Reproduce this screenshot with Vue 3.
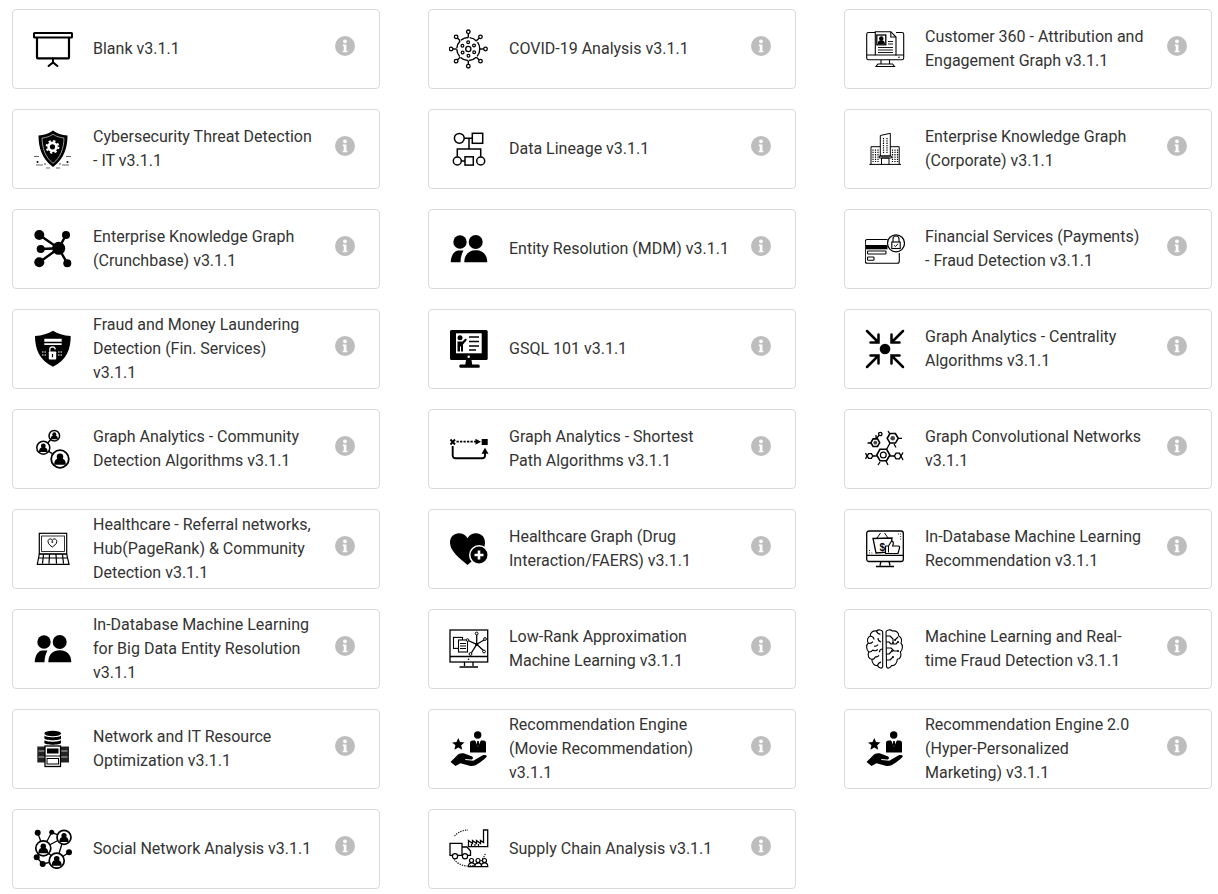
<script setup>
const S = 'fill="none" stroke="#000"'

// circle with a bust inside, used by the community and social network icons
const bust = (x, y, r, sw = 1.5) => `
  <circle cx="${x}" cy="${y}" r="${r}" fill="#fff" stroke="#000" stroke-width="${sw}"/>
  <circle cx="${x}" cy="${y - r * 0.26}" r="${r * 0.37}" fill="#000"/>
  <path d="M${x - r * 0.66} ${y + r * 0.66}c0-${r * 0.6} ${r * 0.3}-${r * 0.74} ${r * 0.66}-${r * 0.74}s${r * 0.66} ${r * 0.14} ${r * 0.66} ${r * 0.74}z" fill="#000"/>`

const blank = `
  <rect x="1" y="4" width="38" height="4.4" ${S} stroke-width="2" rx=".5"/>
  <path d="M4 8.400V28.600a.8.8 0 0 0 .8.8H35.200a.8.8 0 0 0 .8-.8V8.400" ${S} stroke-width="2.200"/>
  <path d="M20 29.400v4.200M15.600 37l4.400-3.600 4.400 3.600" ${S} stroke-width="2" stroke-linecap="round"/>`

const shield = `
  <path d="M20 1.500c3.800 2.900 8.800 4.500 14.500 5 0 12-3.200 23-14.500 31.500C8.700 29.500 5.500 18.500 5.500 6.500c5.700-.5 10.700-2.100 14.500-5z" fill="#000"/>
  <path d="M20 5.300c3 2 6.500 3.200 11 3.800-.3 9.800-3 19-11 25.300-8-6.300-10.700-15.500-11-25.300 4.500-.6 8-1.800 11-3.800z" fill="none" stroke="#fff" stroke-width=".6"/>
  <circle cx="19.500" cy="17.800" r="3.900" fill="none" stroke="#fff" stroke-width="2.600"/>
  <circle cx="19.500" cy="17.800" r="5.800" fill="none" stroke="#fff" stroke-width="2.200" stroke-dasharray="2.200 2.350"/>
  <path d="M1 27.500h5M33 27.500h5M3 36h7M29 36h7M13 39h4M23 39h4" ${S} stroke-width=".6"/>
  <circle cx="4.500" cy="33" r="1"/><circle cx="12" cy="35" r=".7"/><circle cx="27" cy="35" r=".7"/><circle cx="34.500" cy="33" r="1"/>`

const hub = `
  <path d="M25.700 19.300 6.300 6M25.700 19.300 33 6M25.700 19.300 7.700 20M25.700 19.300 6.300 33.300M25.700 19.300 34.300 34.300" ${S} stroke-width="2.400"/>
  <circle cx="25.700" cy="19.300" r="6.500"/><circle cx="6.300" cy="6" r="5"/><circle cx="33" cy="6" r="4"/>
  <circle cx="7.700" cy="20" r="4"/><circle cx="6.300" cy="33.300" r="5"/><circle cx="34.300" cy="34.300" r="4"/>`

const covid = (() => {
  let spikes = ''
  let inner = ''
  for (let i = 0; i < 8; i++) {
    const a = (i * Math.PI) / 4
    const c = Math.cos(a)
    const s = Math.sin(a)
    spikes += `<path d="M${19.3 + 11.5 * c} ${20 + 11.5 * s}L${19.3 + 15.5 * c} ${20 + 15.5 * s}" ${S} stroke-width="1.400"/>
      <circle cx="${19.3 + 17.2 * c}" cy="${20 + 17.2 * s}" r="1.800" fill="#fff" stroke="#000" stroke-width="1.300"/>`
  }
  for (let i = 0; i < 6; i++) {
    const a = (i * Math.PI) / 3 + 0.5
    inner += `<circle cx="${19.3 + 6.7 * Math.cos(a)}" cy="${20 + 6.7 * Math.sin(a)}" r="1.400" ${S} stroke-width="1.200"/>`
  }
  return `<circle cx="19.300" cy="20" r="11.500" ${S} stroke-width="1.400" stroke-dasharray="8 1.200"/>
    <circle cx="19.300" cy="20" r="2.600" ${S} stroke-width="1.300"/>${spikes}${inner}`
})()

const lineage = `<g ${S} stroke-width="1.500">
  <circle cx="10.300" cy="9.300" r="4.900"/><rect x="23.300" y="4.300" width="10.400" height="10"/>
  <path d="M15.200 9.300h8.100M20 9.300V20M8.300 27.800V20h23.400v7.800M12.300 32H16"/>
  <circle cx="8.300" cy="32" r="4"/><rect x="16" y="27.800" width="8.300" height="8.300"/><circle cx="31.700" cy="32" r="4"/></g>`

const people = `
  <circle cx="11" cy="13" r="6.700"/><circle cx="26.700" cy="13" r="7"/>
  <path d="M15.300 33.300C15.300 25.500 20 21.300 26.700 21.300S38.300 25.500 38.300 33.300z"/>
  <path d="M1.700 33.300C2 26.500 5 22 9 21.500h5.500C12.500 25 11.500 29 11.500 33.300z"/>`

const customer = `<g ${S} stroke-width="1.100">
  <path d="M10 3.500H3.500a1.800 1.800 0 0 0-1.800 1.800V29a1.800 1.800 0 0 0 1.800 1.800h33.400a1.800 1.800 0 0 0 1.800-1.800V5.300a1.800 1.800 0 0 0-1.800-1.800H31"/>
  <path d="M1.700 26h8.600M30.500 26h8.200M16 31v4M24.500 31v4M11 37.500h18.500l-2-2.500H13z"/>
  <path d="M10.300 26V2.700h15.500L31 8v18z"/><path d="M25.800 2.700V8H31"/>
  <rect x="11.800" y="6" width="9" height="9.800" stroke-width="1.300"/>
  <path d="M13.300 14.500c0-2 1.300-2.800 3-2.800s3 .8 3 2.800z" fill="#000"/><circle cx="16.300" cy="9.500" r="1.700" fill="#000"/>
  <path d="M23 12.500h5M23 15h5M13 18.500h15M13 21h15M13 23.500h15" stroke-width=".9"/></g>
  <circle cx="34" cy="28.300" r=".8"/>`

const building = `<g ${S} stroke-width="1">
  <path d="M4.300 35.400H36M6 35.400V17.700h9.300M34.200 35.400V17.700H25.300M15.300 27V6.500L25.300 4.300V27M15.300 27H25.300M16.500 35.400V29h7.500v6.400M14.300 27h12v2h-12z"/>
  <path d="M8 20.500V33M10.500 20.500V33M13 20.500V33M27.500 20.500V33M30 20.500V33M32.500 20.500V33M18.500 9v15M22 9v15" stroke-dasharray="1.300 1" stroke-width="1.200"/></g>`

const card = `<g ${S} stroke-width="1.100">
  <path d="M22.500 10.500H2.300a2 2 0 0 0-2 2v19.800a2 2 0 0 0 2 2h30a2 2 0 0 0 2-2V24"/>
  <rect x="2.500" y="22" width="18.500" height="3" rx=".8"/><rect x="2.500" y="28" width="6.500" height="3.200" rx=".8"/></g>
  <rect x="1" y="16" width="21.500" height="4.300"/>
  <circle cx="31" cy="14.300" r="8.500" fill="#fff" stroke="#000" stroke-width="1.200"/>
  <path d="M28 13v-3a3 3 0 0 1 6 0v3" ${S} stroke-width="1.100"/>
  <rect x="26.800" y="13" width="8.400" height="6.500" ${S} stroke-width="1.100"/>
  <path d="M29 16.200l1.500 1.400 2.500-2.800" ${S} stroke-width=".9"/>`

const fraud = `
  <path d="M20 1.700c4.500 3 10.500 4.700 17.700 5.300 0 13-4 24-17.700 30.700C6.300 31 2 20 2 7c7.200-.6 13.200-2.300 18-5.300z"/>
  <path d="M11.300 9.800h17.400v3H11.300zM11.300 14.200h17.400v1.700H11.300z" fill="#fff"/>
  <path d="M16.800 22.700v-2.200a2.700 2.700 0 0 1 5.400 0" fill="none" stroke="#fff" stroke-width="1.200"/>
  <rect x="15.800" y="22.500" width="7.400" height="8" rx=".7" fill="#fff"/>
  <rect x="18.900" y="25" width="1.200" height="3.300"/>
  <path d="M9 23h5M9 26h5M25 23h5M25 26h5" stroke="#fff" stroke-width="1" stroke-dasharray="1.500 1"/>`

const gsql = `
  <rect x="1" y="1" width="37.700" height="30" rx="1.500"/>
  <rect x="7" y="4.300" width="25.700" height="20" fill="#fff"/>
  <circle cx="19.700" cy="27.700" r="1.200" fill="#fff"/>
  <path d="M17 31h5.500l.7 4.500h5.800a1.800 1.800 0 0 1 1.200 3.200H11.200a1.800 1.800 0 0 1 0-3.200h5.100z"/>
  <circle cx="11" cy="8.800" r="2.500"/>
  <path d="M8.500 22.500V12.500h5l3-3 1.500 1.300-4 4.700v7h-2v-5h-1v5z"/>
  <path d="M20 8h10M20 12.500h10M20 17h10M20 21h7" ${S} stroke-width="1.700"/>`

const centrality = `<circle cx="20" cy="20" r="5.300"/>
  <g ${S} stroke-width="2.500" stroke-linecap="round">
  <path d="M2 2L13.500 13.500M13.500 5.500V13.500H5.500"/><path d="M38 2L26.500 13.500M26.500 5.500V13.500H34.500"/>
  <path d="M2 38L13.500 26.500M13.500 34.500V26.500H5.500"/><path d="M38 38L26.500 26.500M26.500 34.500V26.500H34.500"/></g>`

const community = `<path d="M21.300 6.700 10.300 18.700 27 30" ${S} stroke-width="1.400"/>
  ${bust(21.3, 6.7, 5.3)}${bust(10.3, 18.7, 6.5)}${bust(27, 30, 8.8, 1.8)}`

const shortest = `
  <path d="M1.500 10.500l4.500 5M6 10.500l-4.500 5" ${S} stroke-width="1.900"/>
  <path d="M7.500 12.700h20" ${S} stroke-width="1.800" stroke-dasharray="2.300 1.200"/>
  <path d="M26.500 9.700l5.500 3-5.500 3z"/><rect x="32.700" y="10" width="6" height="6"/>
  <path d="M3.700 17v9.500a2.800 2.800 0 0 0 2.800 2.800h26.700a2.800 2.800 0 0 0 2.800-2.800V23" ${S} stroke-width="1.900"/>
  <path d="M36 18.800l-3.500 6h7z"/>`

const hex = (x, y, r, sw = 1.4) => {
  const pts = []
  for (let i = 0; i < 6; i++) {
    const a = (i * Math.PI) / 3
    pts.push(`${x + r * Math.cos(a)},${y + r * Math.sin(a)}`)
  }
  return `<polygon points="${pts.join(' ')}" ${S} stroke-width="${sw}"/>`
}
const gcn = `
  ${hex(18.3, 26, 6.6, 1.6)}<circle cx="18.300" cy="26" r="2.900" ${S} stroke-width="1.200"/>
  ${hex(27.7, 9.3, 5.5, 1.6)}<circle cx="27.700" cy="9.300" r="2.300" fill="#444"/>
  ${hex(10.3, 13.7, 4.4, 1.6)}<circle cx="10.300" cy="13.700" r="1.900" fill="#444"/>
  ${hex(32.7, 27, 3.3)}${hex(5, 27, 2.8)}
  <circle cx="15.300" cy="5" r="1.700" ${S} stroke-width="1.300"/>
  <g ${S} stroke-width="1.300">
  <path d="M21.500 20.500 25 14M24.800 27h4.600M8 27h3.800M11.500 9.300l2.700-3M6 14H2.500M33 9.300h4M24.500 4.500 23 2M29 15l2 3.500M15 33l-2 3M21 32l2 4M36 27l2-3.500M36 27l2 4M2 27 .5 24M2 27 .5 30M11 9.300V6"/></g>`

const laptop = `<g ${S} stroke-width="1.200">
  <rect x="6.300" y="4.300" width="27.400" height="20.700"/><rect x="8.600" y="7" width="22.800" height="15.500" stroke-width=".8"/>
  <path d="M15 12.500c0-3 3.500-3.500 4.300-1 .8-2.500 4.500-2 4.500 1 0 2.700-3 4.300-4.500 5.500-1.500-1.200-4.300-2.800-4.300-5.500z" stroke-width="1"/>
  <path d="M6.300 25 4.300 35.300H36L33.700 25zM5.500 29h29M10.500 25.500l-1 9M16.500 25.500l-.5 9M23 25.500l.5 9M29.500 25.500l1 9"/></g>
  <path d="M18.300 13h2M19.300 12v2" ${S} stroke-width=".7"/>`

const heart = `
  <path d="M18.500 36C11 29.500 1 22.500 1 13.500 1 8 5 4.300 10 4.300c3.500 0 6.700 1.800 8.500 5 1.800-3.200 5-5 8.500-5 5 0 9 3.700 9 9.200 0 3-1 5.500-2.500 8L22 33z"/>
  <circle cx="30" cy="26" r="10" fill="#fff"/><circle cx="30" cy="26" r="8.500"/>
  <path d="M30 21.500v9M25.500 26h9" fill="none" stroke="#fff" stroke-width="2.600"/>`

const inDb = `<g ${S} stroke-width="1.100">
  <rect x="1.700" y="2" width="36.600" height="30.500" rx="2.200" stroke-width="1.300"/>
  <path d="M1.700 26.300h36.600M16 32.500l-1 4M24 32.500l1 4M11 37.500h18" stroke-width="1.300"/>
  <path d="M8 9.500 27 9l-1.500 14-14.500 1z" stroke-width="1.300"/>
  <path d="M12 9 15.500 4M23 9 19.500 4" stroke-width="1"/></g>
  <text x="14.400" y="21.500" font-family="Liberation Sans" font-size="10" font-weight="700">$</text>
  <path d="M20.500 17h3l3-5c1.500 0 2 1.300 1.700 3l-.5 2h5.500a1.500 1.500 0 0 1 1.300 2l-1.500 5.500H20.500z" fill="#fff" stroke="#000" stroke-width="1.200"/>
  <path d="M23.500 17v6.500" ${S} stroke-width="1"/>
  <path d="M33 5h.8M35.300 5h.8M35.300 7.500h.8M35.300 10h.8M4 24h.8M6.500 24h.8M4 21.500h.8" ${S}/>`

const lowRank = `<g ${S} stroke-width="1.100">
  <rect x="1" y="1" width="37.700" height="32" stroke-width="1.300"/>
  <path d="M1 27.500h37.700M15.500 33v4M24 33v4M10.500 38h18.500" stroke-width="1.300"/>
  <rect x="4.500" y="8.400" width="9" height="11" /><rect x="9.500" y="11" width="9" height="12" fill="#fff"/>
  <path d="M11 14.500h6M11 17h6M11 19.500h6" stroke-width="1.100"/>
  <path d="M27.700 15.300 27.700 5M27.700 15.300 18 11M27.700 15.300 36 10.500M27.700 15.300 35 22M27.700 15.300 22 24.500" stroke-width="1.300"/></g>
  <circle cx="27.700" cy="15.300" r="1.500"/>
  <g fill="#fff" stroke="#000"><circle cx="27.700" cy="4.500" r="1.400"/><circle cx="18.500" cy="11" r="1.300"/><circle cx="36" cy="10" r="1.400"/><circle cx="35" cy="22.500" r="1.400"/><circle cx="21.500" cy="25" r="1.400"/></g>
  <circle cx="19.500" cy="30.200" r=".8"/>`

const brain = `<g ${S} stroke-width="1.100" stroke-linejoin="round">
  <path d="M17.700 2.800C17 .8 13.500.2 11.500 2 8 1.500 5 3.500 5.300 7 2.800 8 1.500 11.500 3.200 14 .9 16 1.200 21 3.800 23c-1.800 3 0 7 3 7.300.2 4 2.700 6.700 5.700 6.300 1.500 3 4.800 3.300 5.200.7z"/>
  <path d="M5.300 7c2 .2 3.500 1.500 3.800 3.500M11.500 2c.5 2 2 3 4 3.200M3.200 14c2 .8 3.500.3 4.800-1.300M13 9c0 2 1 3.500 3 4M3.800 23c1.800.2 3.200-.7 4-2 1.500 1 3.500 1 5-.5M9 17c1.500.5 3 0 4-1.300M17.500 20c-2 0-3 1.500-3 3.200M6.800 30.300c1.500 0 3-1 3.500-2.500 1.500.3 3-.3 3.700-1.500M12.500 36.600c.4-2 1.800-3.200 3.500-3.500"/>
  <path d="M21 2.800c.5-2 4.500-2.600 6.500-.8 3.500-.5 6.500 1.500 6.200 5 2.500 1 3.800 4.500 2.200 7 2.200 2 2 7-.6 9 1.800 3 0 7-3 7.300-.2 4-2.700 6.700-5.700 6.300-1.500 3-4.700 3.300-5.100.7z"/>
  <path d="M21 7h4l3 3v4M21 13h3l2 2h5l2-2M21 19h5l3 3h4M21 25h3l3-3M21 31h4l3-3M33 8l-3 3"/></g>
  <g><circle cx="28" cy="14" r="1"/><circle cx="33" cy="13" r="1"/><circle cx="27" cy="22" r="1"/><circle cx="33" cy="22" r="1"/><circle cx="28" cy="28" r="1"/><circle cx="30" cy="11" r="1"/></g>`

const network = `
  <ellipse cx="19.700" cy="4.500" rx="8.300" ry="2.700"/>
  <path d="M11.400 6.500c1 2.300 15.600 2.300 16.600 0v3c-1 2.300-15.600 2.300-16.600 0zM11.400 11c1 2.300 15.600 2.300 16.600 0v3c-1 2.300-15.600 2.300-16.600 0z"/>
  <rect x="4.300" y="17.500" width="12" height="16" fill="#222"/><rect x="24" y="17.500" width="12" height="16" fill="#222"/>
  <path d="M5.500 22h10M5.500 28h10M24.500 22h10M24.500 28h10" stroke="#bbb"/>
  <rect x="12" y="17" width="15.500" height="20.500" fill="#fff" stroke="#000" stroke-width="1.300"/>
  <rect x="14" y="19.500" width="11.500" height="5"/><path d="M12.500 27h14.500" stroke="#000"/><rect x="14" y="29.500" width="11.500" height="5.500" fill="#fff" stroke="#000"/>`

const reco = `
  <polygon points="9.300,9 11.100,13 15.500,13.400 12.200,16.300 13.200,20.700 9.300,18.400 5.400,20.700 6.400,16.300 3.100,13.400 7.500,13"/>
  <circle cx="28.700" cy="6" r="3.700"/>
  <path d="M21 14a2.500 2.500 0 0 1 2.500-2.500h10.500A2.500 2.500 0 0 1 37 14v9.500H21z"/>
  <path d="M26 11l3 7 3-7z" fill="#fff"/><path d="M28.200 12h1.600l.4 4-1.200 2-1.200-2z"/>
  <path d="M1.500 33 8 26.500c2-2 5-2.700 8-1.700l6.500 2.400c2.300.8 1.800 3.500-.7 3.300l-5.500-.5v1l8 .8 9-5.300c2-1.100 5.200-.3 4.200 1.500-3 3.200-7 6-10.500 8-2 1.100-4.500 1.300-6.500.7l-9-2.500-5 2.800z"/>`

const social = `
  <path d="M4.700 3.700 10.300 19.300M18.700 3.300 10.300 19.300M18.700 3.300 31 8.300M10.300 19.300 23.700 31.700M31 8.300 23.700 31.700M36 23.300 23.700 31.700M3.700 28.300 10.300 19.300M9.700 35 23.700 31.700M10.300 19.300 31 8.300M3.700 28.300 9.700 35" ${S} stroke-width="1.300"/>
  <circle cx="4.700" cy="3.700" r="3"/><circle cx="18.700" cy="3.300" r="2.500"/><circle cx="36" cy="23.300" r="3"/><circle cx="3.700" cy="28.300" r="3"/><circle cx="9.700" cy="35" r="3"/>
  ${bust(31, 8.3, 7, 1.7)}${bust(10.3, 19.3, 7.5, 1.7)}${bust(23.7, 31.7, 7.5, 1.7)}`

const supply = `
  <path d="M5.500 7A18 18 0 0 1 19 1M5 30.500A18 18 0 0 0 19 37M21 37A18 18 0 0 0 36.500 24" ${S} stroke-width="1.100" stroke-dasharray="1.300 1.100"/>
  <g ${S} stroke-width="1.200">
  <path d="M19.500 17.700V11.500l4 3v-3l4 3v-3l4 3v-3l3 2V1h4.200v16.700z" stroke-width="1.300"/>
  <path d="M22.500 15v2M26 15v2M29.500 15v2"/>
  <path d="M1 14.300h12v12H1zM13 18h5l3.500 4v4.300H13" stroke-width="1.300" fill="#fff"/>
  <circle cx="6" cy="27.300" r="2.600" fill="#fff"/><circle cx="16" cy="27.300" r="2.600" fill="#fff"/>
  <circle cx="22.500" cy="31.500" r="2"/><circle cx="29" cy="31.500" r="2"/><circle cx="35.500" cy="31.500" r="2"/>
  <path d="M19.500 37.600c0-5 6.500-5 6.500 0zM26 37.600c0-5 6.500-5 6.500 0zM32.300 37.600c0-5 6.500-5 6.500 0z"/></g>`

const templates = [
  ['Blank v3.1.1', blank],
  ['COVID-19 Analysis v3.1.1', covid],
  ['Customer 360 - Attribution and Engagement Graph v3.1.1', customer],
  ['Cybersecurity Threat Detection - IT v3.1.1', shield],
  ['Data Lineage v3.1.1', lineage],
  ['Enterprise Knowledge Graph (Corporate) v3.1.1', building],
  ['Enterprise Knowledge Graph (Crunchbase) v3.1.1', hub],
  ['Entity Resolution (MDM) v3.1.1', people],
  ['Financial Services (Payments) - Fraud Detection v3.1.1', card],
  ['Fraud and Money Laundering Detection (Fin. Services) v3.1.1', fraud],
  ['GSQL 101 v3.1.1', gsql],
  ['Graph Analytics - Centrality Algorithms v3.1.1', centrality],
  ['Graph Analytics - Community Detection Algorithms v3.1.1', community],
  ['Graph Analytics - Shortest Path Algorithms v3.1.1', shortest],
  ['Graph Convolutional Networks v3.1.1', gcn],
  ['Healthcare - Referral networks, Hub(PageRank) & Community Detection v3.1.1', laptop],
  ['Healthcare Graph (Drug Interaction/FAERS) v3.1.1', heart],
  ['In-Database Machine Learning Recommendation v3.1.1', inDb],
  ['In-Database Machine Learning for Big Data Entity Resolution v3.1.1', people],
  ['Low-Rank Approximation Machine Learning v3.1.1', lowRank],
  ['Machine Learning and Real-time Fraud Detection v3.1.1', brain],
  ['Network and IT Resource Optimization v3.1.1', network],
  ['Recommendation Engine (Movie Recommendation) v3.1.1', reco],
  ['Recommendation Engine 2.0 (Hyper-Personalized Marketing) v3.1.1', reco],
  ['Social Network Analysis v3.1.1', social],
  ['Supply Chain Analysis v3.1.1', supply],
].map(([title, icon]) => ({ title, icon }))
</script>

<template>
  <main class="grid">
    <article v-for="t in templates" :key="t.title" class="card">
      <svg class="icon" viewBox="0 0 40 40" v-html="t.icon"></svg>
      <p class="title">{{ t.title }}</p>
      <svg class="info" viewBox="0 0 20 20">
        <circle cx="10" cy="10" r="10" fill="#bdbdbd" />
        <circle cx="10" cy="5.300" r="1.900" fill="#fff" />
        <path d="M7.800 8.500h3.600v6.200h1v1.600H7.700v-1.600h1v-4.600h-.9z" fill="#fff" />
      </svg>
    </article>
  </main>
</template>

<style>
html,
body {
  background: #fff;
}
</style>

<style scoped>
.grid {
  display: grid;
  grid-template-columns: repeat(3, 368px);
  grid-auto-rows: 80px;
  column-gap: 48px;
  row-gap: 20px;
  padding: 9px 6px 5px 12px;
  font-family: Roboto, "Liberation Sans", sans-serif;
}
.card {
  display: flex;
  align-items: center;
  box-sizing: border-box;
  padding: 0 24px 0 20px;
  background: #fff;
  border: 1px solid #d9d9d9;
  border-radius: 4px;
}
.icon {
  flex: none;
  width: 40px;
  height: 40px;
  margin-right: 20px;
}
.title {
  flex: none;
  width: 220px;
  margin: 0;
  font-size: 16px;
  line-height: 24px;
  color: #333;
}
.info {
  flex: none;
  width: 20px;
  height: 20px;
  margin: -6px 0 0 22px;
}
</style>
